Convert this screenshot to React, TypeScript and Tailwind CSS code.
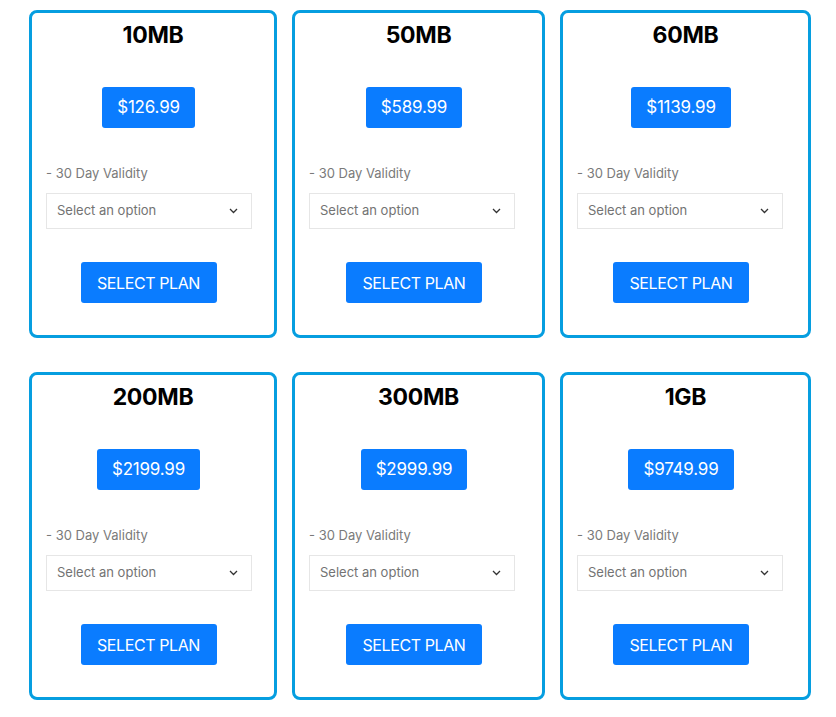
import React from "react";

const plans = [
  { name: "10MB", price: "$126.99" },
  { name: "50MB", price: "$589.99" },
  { name: "60MB", price: "$1139.99" },
  { name: "200MB", price: "$2199.99" },
  { name: "300MB", price: "$2999.99" },
  { name: "1GB", price: "$9749.99" },
];

function Card({ name, price }: { name: string; price: string }) {
  return (
    <div className="h-[328px] border-[3px] border-[#069ee0] rounded-[8px] flex flex-col items-center bg-white">
      <div className="pt-[8px] text-[23px] leading-[28px] font-bold text-black tracking-[-0.3px]">{name}</div>
      <div className="mt-[38px] mr-[9px] h-[41px] px-[15px] flex items-center bg-[#0a7cff] rounded-[3px] text-white text-[17px] tracking-[-0.2px]">
        {price}
      </div>
      <div className="mt-[35px] self-start ml-[14px] w-[206px] flex flex-col">
        <div className="text-[13px] leading-[20px] text-[#7a7a7a]">- 30 Day Validity</div>
        <div className="mt-[10px] h-[36px] border border-[#e6e6e6] flex items-center justify-between pl-[10px] pr-[13px]">
          <span className="text-[13px] text-[#737373]">Select an option</span>
          <svg width="9" height="6" viewBox="0 0 9 6" fill="none">
            <polyline points="1,1 4.5,4.5 8,1" stroke="#333" strokeWidth="1.3" />
          </svg>
        </div>
      </div>
      <div className="mt-[33px] mr-[9px] h-[41px] w-[136px] flex items-center justify-center bg-[#0a7cff] rounded-[3px] text-white text-[16px] tracking-[-0.4px]">
        SELECT PLAN
      </div>
    </div>
  );
}

export default function App() {
  return (
    <div
      className="w-[836px] h-[717px] bg-white pt-[10px] pl-[29px]"
      style={{ fontFamily: "Inter, 'Noto Sans', sans-serif" }}
    >
      <div className="grid grid-cols-[248px_253px_251px] gap-x-[15px] gap-y-[34px]">
        {plans.map((p) => (
          <Card key={p.name} {...p} />
        ))}
      </div>
    </div>
  );
}
